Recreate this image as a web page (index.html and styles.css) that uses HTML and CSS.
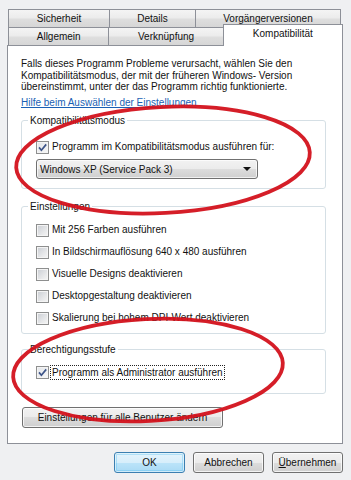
FILE: index.html
```html
<!DOCTYPE html>
<html lang="de">
<head>
<meta charset="utf-8">
<title>Eigenschaften – Kompatibilität</title>
<link rel="stylesheet" href="styles.css">
</head>
<body>
<div class="dialog">
  <div class="tabs">
    <div class="tabrow row1">
      <div class="tab w1">Sicherheit</div>
      <div class="tab w2">Details</div>
      <div class="tab w3">Vorgängerversionen</div>
    </div>
    <div class="tabrow row2">
      <div class="tab w1">Allgemein</div>
      <div class="tab w4">Verknüpfung</div>
      <div class="tab sel">Kompatibilität</div>
    </div>
  </div>

  <div class="panel">
    <p class="intro">Falls dieses Programm Probleme verursacht, wählen Sie den<br>Kompatibilitätsmodus, der mit der früheren Windows- Version<br>übereinstimmt, unter der das Programm richtig funktionierte.</p>
    <a class="link" href="#">Hilfe beim Auswählen der Einstellungen</a>

    <div class="group g1">
      <div class="gtitle">Kompatibilitätsmodus</div>
      <div class="check first">
        <span class="box checked"><svg viewBox="0 0 13 13" width="13" height="13"><path d="M3 6.4 L5.4 9.2 L10.2 3.4" fill="none" stroke="#3d5488" stroke-width="1.7"/></svg></span>
        <span class="label">Programm im Kompatibilitätsmodus ausführen für:</span>
      </div>
      <div class="select">
        <span>Windows XP (Service Pack 3)</span>
        <span class="arrow"></span>
      </div>
    </div>

    <div class="group g2">
      <div class="gtitle">Einstellungen</div>
      <div class="list">
        <div class="check"><span class="box"></span><span class="label">Mit 256 Farben ausführen</span></div>
        <div class="check"><span class="box"></span><span class="label">In Bildschirmauflösung 640 x 480 ausführen</span></div>
        <div class="check"><span class="box"></span><span class="label">Visuelle Designs deaktivieren</span></div>
        <div class="check"><span class="box"></span><span class="label">Desktopgestaltung deaktivieren</span></div>
        <div class="check"><span class="box"></span><span class="label">Skalierung bei hohem DPI-Wert deaktivieren</span></div>
      </div>
    </div>

    <div class="group g3">
      <div class="gtitle">Berechtigungsstufe</div>
      <div class="check first">
        <span class="box checked"><svg viewBox="0 0 13 13" width="13" height="13"><path d="M3 6.4 L5.4 9.2 L10.2 3.4" fill="none" stroke="#3d5488" stroke-width="1.7"/></svg></span>
        <span class="label focus">Programm als Administrator ausführen</span>
      </div>
    </div>

    <button class="btn wide">Einstellungen für alle Benutzer ändern</button>
  </div>

  <div class="buttons">
    <button class="btn default">OK</button>
    <button class="btn">Abbrechen</button>
    <button class="btn"><u>Ü</u>bernehmen</button>
  </div>
</div>

<svg class="marks" width="351" height="480" viewBox="0 0 351 480" aria-hidden="true">
  <ellipse cx="163" cy="160" rx="147" ry="53" transform="rotate(-3 163 160)" />
  <ellipse cx="148" cy="370" rx="135" ry="51" transform="rotate(-3 148 370)" />
</svg>
</body>
</html>
```
FILE: styles.css
```css
* { box-sizing: border-box; }

html, body {
  margin: 0;
  padding: 0;
}

body {
  width: 351px;
  height: 480px;
  background: #eff0f2;
  font-family: "Liberation Sans", Arial, sans-serif;
  font-size: 10px;
  color: #111;
  position: relative;
  overflow: hidden;
}

.dialog {
  padding: 9px 8px 0 7px;
}

/* ---------- tabs ---------- */
.tabs {
  margin-left: 1px;
}

.tabrow {
  display: flex;
  height: 18px;
}

.row2 {
  align-items: flex-end;
}

.tab {
  height: 18px;
  border: 1px solid #8d9098;
  border-bottom: none;
  background: linear-gradient(#f4f4f4 0%, #ececec 45%, #dedede 55%, #d6d6d6 100%);
  text-align: center;
  line-height: 17px;
  color: #111;
  white-space: nowrap;
}

.tab + .tab {
  margin-left: -1px;
}

.w1 { width: 102px; }
.w2 { width: 87px; }
.w3 { width: 146px; }
.w4 { width: 116px; }

.tab.sel {
  width: 121px;
  height: 22px;
  margin-bottom: -1px;
  background: #fff;
  line-height: 17px;
  position: relative;
  z-index: 2;
}

/* ---------- panel ---------- */
.panel {
  width: 336px;
  height: 399px;
  background: #fff;
  border: 1px solid #8d9098;
  padding: 12px 0 0 13px;
}

.intro {
  margin: 0;
  line-height: 11.7px;
  white-space: nowrap;
}

.link {
  display: block;
  margin-top: 4px;
  line-height: 12px;
  color: #1a5fb4;
  text-decoration: underline;
}

.group {
  width: 305px;
  border: 1px solid #d5dfe5;
  border-radius: 3px;
  padding: 0 0 0 14px;
}

.gtitle {
  display: table;
  margin: -6px 0 0 -8px;
  padding: 0 2px;
  background: #fff;
  line-height: 12px;
}

.g1 { margin-top: 11px; padding-bottom: 9px; }
.g2 { margin-top: 17px; padding-bottom: 8px; }
.g3 { margin-top: 15px; padding-bottom: 14px; }

.check {
  display: flex;
  align-items: center;
  height: 14px;
  white-space: nowrap;
}

.g1 .check.first { margin-top: 13px; }
.g3 .check.first { margin-top: 9px; }

.list {
  margin-top: 10px;
  display: flex;
  flex-direction: column;
  gap: 8px;
}

.box {
  flex: none;
  width: 13px;
  height: 13px;
  border: 1px solid #8e8f8f;
  background: linear-gradient(135deg, #c9cdd3 0%, #e6e7e9 60%, #f6f6f6 100%);
  box-shadow: inset 0 0 0 1px #f4f4f4;
  margin-right: 3px;
  position: relative;
}

.box.checked {
  background: linear-gradient(135deg, #e3e6ea 0%, #f7f7f7 100%);
}

.box svg {
  display: block;
  margin: -1px;
}

.label {
  line-height: 14px;
}

.label.focus {
  margin-left: -2px;
  padding: 0 1px;
  border: 1px dotted #222;
  line-height: 13px;
}

.select {
  margin-top: 5px;
  width: 222px;
  height: 20px;
  border: 1px solid #707070;
  border-radius: 3px;
  background: linear-gradient(#f2f2f2 0%, #ebebeb 50%, #dddddd 50%, #cfcfcf 100%);
  box-shadow: inset 0 0 0 1px rgba(255, 255, 255, 0.7);
  display: flex;
  align-items: center;
  justify-content: space-between;
  padding: 0 6px 0 3px;
  white-space: nowrap;
}

.arrow {
  width: 0;
  height: 0;
  border-left: 4px solid transparent;
  border-right: 4px solid transparent;
  border-top: 4px solid #111;
}

/* ---------- buttons ---------- */
.btn {
  font-family: inherit;
  font-size: 10px;
  color: #111;
  height: 21px;
  border: 1px solid #707070;
  border-radius: 3px;
  background: linear-gradient(#f2f2f2 0%, #ebebeb 50%, #dddddd 50%, #cfcfcf 100%);
  box-shadow: inset 0 0 0 1px rgba(255, 255, 255, 0.75);
  padding: 0;
  line-height: 18px;
  white-space: nowrap;
}

.btn.wide {
  display: block;
  width: 201px;
  margin: 13px 0 0 1px;
}

.buttons {
  display: flex;
  justify-content: flex-end;
  gap: 8px;
  margin-top: 8px;
}

.buttons .btn {
  width: 71px;
}

.btn.default {
  border-color: #3c7fb1;
  background: linear-gradient(#e5f4fc 0%, #d7eefb 50%, #bce4f9 50%, #a9daf5 100%);
  box-shadow: inset 0 0 0 1px rgba(255, 255, 255, 0.6), inset 0 0 0 2px rgba(80, 190, 240, 0.35);
}

.btn u {
  text-decoration: underline;
}

/* ---------- red marker ellipses (overlay) ---------- */
.marks {
  position: absolute;
  left: 0;
  top: 0;
  pointer-events: none;
}

.marks ellipse {
  fill: none;
  stroke: #d3121c;
  stroke-width: 3.8;
  opacity: 0.95;
}
```
